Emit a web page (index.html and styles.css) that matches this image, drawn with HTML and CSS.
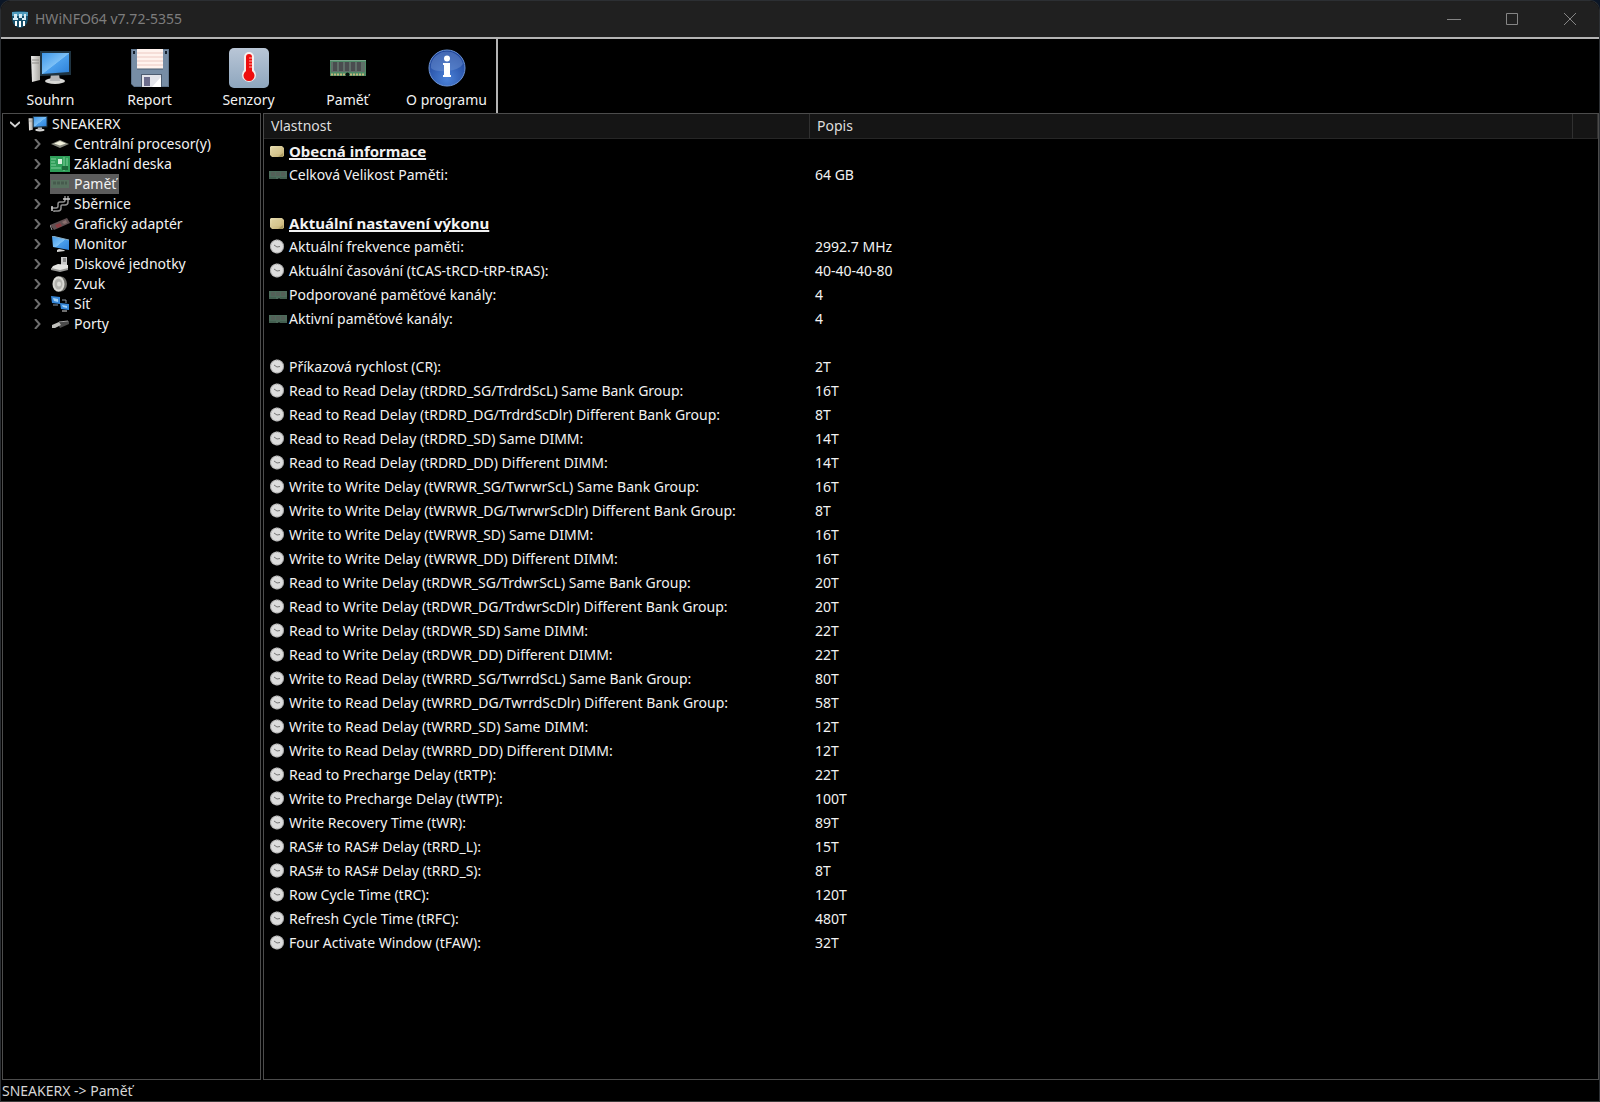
FILE: index.html
```html
<!DOCTYPE html>
<html lang="cs">
<head>
<meta charset="utf-8">
<meta name="viewport" content="width=device-width, initial-scale=1">
<title>HWiNFO64 v7.72-5355</title>
<link rel="stylesheet" href="styles.css">
</head>
<body>
<svg class="sprite" aria-hidden="true">
  <defs>
    <linearGradient id="g-screen" x1="0" y1="0" x2="1" y2="1"><stop offset="0" stop-color="#3f98ea"/><stop offset=".5" stop-color="#7cc0f6"/><stop offset=".52" stop-color="#4a9fec"/><stop offset="1" stop-color="#2d80d8"/></linearGradient>
    <linearGradient id="g-case" x1="0" x2="1"><stop offset="0" stop-color="#efeeec"/><stop offset="1" stop-color="#a9a7a2"/></linearGradient>
    <linearGradient id="g-note" x1="0" y1="0" x2="1" y2="1"><stop offset="0" stop-color="#e9dfb4"/><stop offset="1" stop-color="#c2ae70"/></linearGradient>
    <linearGradient id="g-panel" x1="0" y1="0" x2="0" y2="1"><stop offset="0" stop-color="#b9c6d6"/><stop offset="1" stop-color="#8ea6be"/></linearGradient>
    <radialGradient id="g-info" cx=".5" cy=".8" r=".8"><stop offset="0" stop-color="#4b82d8"/><stop offset="1" stop-color="#1b3f94"/></radialGradient>
    <radialGradient id="g-dial"><stop offset="0" stop-color="#c4c4c4"/><stop offset=".6" stop-color="#eeeeee"/><stop offset="1" stop-color="#bdbdbd"/></radialGradient>
  </defs>
  <symbol id="i-computer" viewBox="0 0 40 34">
    <path d="M0 5h9v24l-8 2z" fill="url(#g-case)"/><path d="M1 9h7M1 12h7" stroke="#8d8b87"/>
    <ellipse cx="24" cy="30" rx="10" ry="3" fill="#d8d8d6"/><path d="M20 23h8l1 7h-10z" fill="#b5b6b8"/>
    <path d="M9 0h31v24l-31 1z" fill="#1f3442"/><path d="M11 2h27v19l-27 2z" fill="url(#g-screen)"/>
  </symbol>
  <symbol id="i-note" viewBox="0 0 16 16">
    <path d="M2 2h11l2 2v8l-2 1H3l-2-2V3z" fill="url(#g-note)"/><path d="M3 5h9M3 7h9M3 9h8" stroke="#d9ca94"/><path d="M9 13l5-4v4z" fill="#a99a63"/>
  </symbol>
  <symbol id="i-clock" viewBox="0 0 16 16">
    <circle cx="8" cy="7.500" r="7" fill="url(#g-dial)"/><circle cx="8" cy="7.500" r="6.500" fill="none" stroke="#8e8e8e" stroke-dasharray="1 1.4"/><circle cx="8" cy="7.500" r="5" fill="#dcdcdc"/><path d="M5 6l3 2 3-.5" fill="none" stroke="#777"/>
  </symbol>
  <symbol id="i-ram" viewBox="0 0 18 8">
    <path d="M0 0h18v8h-7l-1-1-1 1H0z" fill="#4d6b5b"/><path d="M2 1h4v4H2zM7 1h4v4H7zM12 1h4v4h-4z" fill="#546058"/><path d="M0 7h7M11 7h7" stroke="#3b5547"/>
  </symbol>
  <symbol id="i-chevron" viewBox="0 0 10 10"><path d="M3 0l4.500 5L3 10" fill="none" stroke="currentColor" stroke-width="2"/></symbol>
</svg>

<div class="window">
  <header class="titlebar">
    <svg class="logo" viewBox="0 0 18 17" aria-hidden="true">
      <path d="M1 1q8-2 16 0v7q-1 8-8 9-7-1-8-9z" fill="#17506b"/><path d="M1 1h16v4H1z" fill="#4e9bbd"/>
      <path d="M3 3h3v4H3zM8 3h3v4H8zM13 3h2v4h-2zM2 7h5v2H2zM11 7h4v2h-4z" fill="#d5eaf2"/><path d="M4 10h2v5H4zM8 10h2v6H8zM12 10h2v5h-2z" fill="#fff"/>
    </svg>
    <h1 class="title">HWiNFO64 v7.72-5355</h1>
    <button class="caption" aria-label="Minimalizovat"><svg viewBox="0 0 14 14"><path d="M0 7.500h14"/></svg></button>
    <button class="caption" aria-label="Maximalizovat"><svg viewBox="0 0 14 14"><path d="M1.500 1.500h11v11h-11z"/></svg></button>
    <button class="caption" aria-label="Zavřít"><svg viewBox="0 0 14 14"><path d="M1 1l12 12M13 1L1 13"/></svg></button>
  </header>

  <nav class="toolbar" aria-label="Nástroje">
    <button class="tool"><svg class="tool-icon" viewBox="0 0 40 40"><use href="#i-computer" y="3" width="40" height="34"/></svg>Souhrn</button>
    <button class="tool">
      <svg class="tool-icon" viewBox="0 0 40 40">
        <path d="M1 1h38v38H4l-3-3z" fill="#60758c"/><path d="M2 2h36v36H4l-2-2z" fill="#778da5"/>
        <path d="M7 1h26v20H7z" fill="#fff3ee"/><path d="M7 5h26M7 9h26M7 13h26M7 17h26" stroke="#ecc9c2"/><path d="M7 21h26" stroke="#4b5c70"/>
        <path d="M3 3h2v3H3zM35 3h2v3h-2z" fill="#15202d"/>
        <path d="M11 26h21v13H11z" fill="#4d5c70"/><path d="M12 27h19v12H12z" fill="#e3e4ea"/><path d="M14 29h6v9h-6z" fill="#6d6d8c"/><path d="M22 39l9-10v10z" fill="#fff"/>
      </svg>Report</button>
    <button class="tool">
      <svg class="tool-icon" viewBox="0 0 40 40">
        <rect width="40" height="40" rx="5" fill="url(#g-panel)"/>
        <path d="M15 9a5 5 0 0 1 10 0v13a7 7 0 1 1-10 0z" fill="#f6efee"/><path d="M17 9a3 3 0 0 1 6 0v14a5.500 5.500 0 1 1-6 0z" fill="#ee0d0d"/><path d="M20 10h3M20 13h3M20 16h3M20 19h3" stroke="#ffb0a8"/>
      </svg>Senzory</button>
    <button class="tool">
      <svg class="tool-icon" viewBox="0 0 40 40">
        <path d="M2 12h36v16H2z" fill="#4d8a66"/><path d="M3 14h34v10H3z" fill="#5f6f68"/>
        <path d="M5 14h4v9H5zM11 14h4v9h-4zM17 14h4v9h-4zM23 14h4v9h-4zM29 14h4v9h-4z" fill="#4a4d4f"/><path d="M2 12.500h36" stroke="#7ba58b"/>
        <path d="M3 26.500h14M22 26.500h15" stroke="#c3b77c" stroke-width="2" stroke-dasharray="2 1"/><circle cx="19.500" cy="26.500" r="2" fill="#08120c"/>
      </svg>Paměť</button>
    <button class="tool">
      <svg class="tool-icon" viewBox="0 0 40 40">
        <circle cx="20" cy="20" r="18" fill="url(#g-info)" stroke="#6c94d6"/><path d="M4 16a16.500 16.500 0 0 1 32 0q-4 6-16 7Q8 24 4 20z" fill="#6c8fcf" opacity=".5"/>
        <circle cx="20" cy="10.500" r="3" fill="#fff"/><path d="M16 15h7v12h1v2h-8v-2h1V17h-1z" fill="#fff"/>
      </svg>O programu</button>
  </nav>

  <div class="panes">
    <aside class="tree" aria-label="Zařízení">
      <div class="root">
        <button class="node"><svg class="arrow open"><use href="#i-chevron"/></svg><svg class="node-icon"><use href="#i-computer"/></svg><span>SNEAKERX</span></button>
      </div>
      <ul class="branch">
        <li><button class="node"><svg class="arrow"><use href="#i-chevron"/></svg><span class="pick"><svg class="node-icon" viewBox="0 0 20 16"><path d="M1 8l9-4 9 4-9 4z" fill="#85877c"/><path d="M4 7.500l6-2.500 6 2.500-6 2z" fill="#f1f1dc"/></svg>Centrální procesor(y)</span></button></li>
        <li><button class="node"><svg class="arrow"><use href="#i-chevron"/></svg><span class="pick"><svg class="node-icon" viewBox="0 0 20 16"><path d="M0 0h20v16H0z" fill="#2f9e59"/><path d="M1 3h5M1 6h4M1 9h5M1 12h10M14 1v14M17 2v12" stroke="#80cf9c"/><path d="M8 3h4v5H8z" fill="#d7eedd"/><path d="M12 10h6v4h-6z" fill="#1c6b3a"/></svg>Základní deska</span></button></li>
        <li><button class="node"><svg class="arrow"><use href="#i-chevron"/></svg><span class="pick selected"><svg class="node-icon" viewBox="0 0 20 16"><path d="M1 4h18v8H1z" fill="#56705e"/><path d="M3 7h14" stroke="#465a4d" stroke-width="3" stroke-dasharray="3 1"/></svg>Paměť</span></button></li>
        <li><button class="node"><svg class="arrow"><use href="#i-chevron"/></svg><span class="pick"><svg class="node-icon" viewBox="0 0 20 16"><path d="M1 12h5q2 0 2-2V8q0-2 2-2h3q2 0 2-2V0M4 16v-1h4q3 0 3-3v-2q0-1 1-1h3q3 0 3-3V0" fill="none" stroke="#8f8f8f" stroke-width="1.500"/><path d="M2 10v5M13 3h7" stroke="#cfcfcf" stroke-width="1.500"/></svg>Sběrnice</span></button></li>
        <li><button class="node"><svg class="arrow"><use href="#i-chevron"/></svg><span class="pick"><svg class="node-icon" viewBox="0 0 20 16"><path d="M0 9L17 2l3 5L4 14z" fill="#625153"/><path d="M5 9l5-2 2 3-5 2z" fill="#8c3d42"/><path d="M12 6l4-2 1 3-3 1z" fill="#89706f"/><path d="M0 9l2 5" stroke="#999"/></svg>Grafický adaptér</span></button></li>
        <li><button class="node"><svg class="arrow"><use href="#i-chevron"/></svg><span class="pick"><svg class="node-icon" viewBox="0 0 20 16"><path d="M2 0l17 4v10L3 11z" fill="url(#g-screen)"/><path d="M2 0l17 4" stroke="#8aaec4"/><path d="M9 13l5 1 1 1-8 1v-2z" fill="#d5d5d3"/></svg>Monitor</span></button></li>
        <li><button class="node"><svg class="arrow"><use href="#i-chevron"/></svg><span class="pick"><svg class="node-icon" viewBox="0 0 20 16"><path d="M11 1h6v9h-6z" fill="#c9c9c9"/><path d="M13 2h3v4h-3z" fill="#8a8a8a"/><path d="M3 10l5-2 10 1v4l-7 2-10-2z" fill="#e4e4e2"/><path d="M1 12l9 2 8-2v2l-8 2-9-2z" fill="#9a9a98"/></svg>Diskové jednotky</span></button></li>
        <li><button class="node"><svg class="arrow"><use href="#i-chevron"/></svg><span class="pick"><svg class="node-icon" viewBox="0 0 20 16"><ellipse cx="11" cy="8" rx="6" ry="7.500" fill="#6c6c68"/><ellipse cx="8.500" cy="8" rx="6" ry="7.800" fill="#dadad5"/><ellipse cx="8.500" cy="8" rx="4" ry="5.500" fill="#b4b4b0"/><ellipse cx="9" cy="8" rx="2" ry="2.500" fill="#deded9"/></svg>Zvuk</span></button></li>
        <li><button class="node"><svg class="arrow"><use href="#i-chevron"/></svg><span class="pick"><svg class="node-icon" viewBox="0 0 20 16"><path d="M1 0l9 1v7L2 7z" fill="#3687d8"/><path d="M3 2l5 1v3L4 5z" fill="#a1d1f7"/><path d="M3 9h5M12 4h4v3" fill="none" stroke="#8c99a5"/><path d="M10 7l9 1v6l-8-1z" fill="#3687d8"/><path d="M12 9l5 1v2l-4-1z" fill="#a1d1f7"/><path d="M12 15h5" stroke="#ddd"/></svg>Síť</span></button></li>
        <li><button class="node"><svg class="arrow"><use href="#i-chevron"/></svg><span class="pick"><svg class="node-icon" viewBox="0 0 20 16"><path d="M7 7l12-2v3l-9 4z" fill="#4a4a4a"/><path d="M2 9l7-3 2 3-6 3H2z" fill="#c0c0bc"/><path d="M9 6l9-1" stroke="#a2a2a2"/></svg>Porty</span></button></li>
      </ul>
    </aside>

    <main class="details">
      <table class="props">
        <colgroup><col class="c-name"><col><col class="c-end"></colgroup>
        <thead><tr><th scope="col">Vlastnost</th><th scope="col">Popis</th><td></td></tr></thead>
        <tbody>
          <tr class="group"><th scope="rowgroup" colspan="3"><svg class="ic"><use href="#i-note"/></svg><span>Obecná informace</span></th></tr>
          <tr><th scope="row"><svg class="ic ram"><use href="#i-ram"/></svg>Celková Velikost Paměti:</th><td>64 GB</td></tr>
          <tr class="gap"><td colspan="3"></td></tr>
          <tr class="group"><th scope="rowgroup" colspan="3"><svg class="ic"><use href="#i-note"/></svg><span>Aktuální nastavení výkonu</span></th></tr>
          <tr><th scope="row"><svg class="ic"><use href="#i-clock"/></svg>Aktuální frekvence paměti:</th><td>2992.7 MHz</td></tr>
          <tr><th scope="row"><svg class="ic"><use href="#i-clock"/></svg>Aktuální časování (tCAS-tRCD-tRP-tRAS):</th><td>40-40-40-80</td></tr>
          <tr><th scope="row"><svg class="ic ram"><use href="#i-ram"/></svg>Podporované paměťové kanály:</th><td>4</td></tr>
          <tr><th scope="row"><svg class="ic ram"><use href="#i-ram"/></svg>Aktivní paměťové kanály:</th><td>4</td></tr>
          <tr class="gap"><td colspan="3"></td></tr>
          <tr><th scope="row"><svg class="ic"><use href="#i-clock"/></svg>Příkazová rychlost (CR):</th><td>2T</td></tr>
          <tr><th scope="row"><svg class="ic"><use href="#i-clock"/></svg>Read to Read Delay (tRDRD_SG/TrdrdScL) Same Bank Group:</th><td>16T</td></tr>
          <tr><th scope="row"><svg class="ic"><use href="#i-clock"/></svg>Read to Read Delay (tRDRD_DG/TrdrdScDlr) Different Bank Group:</th><td>8T</td></tr>
          <tr><th scope="row"><svg class="ic"><use href="#i-clock"/></svg>Read to Read Delay (tRDRD_SD) Same DIMM:</th><td>14T</td></tr>
          <tr><th scope="row"><svg class="ic"><use href="#i-clock"/></svg>Read to Read Delay (tRDRD_DD) Different DIMM:</th><td>14T</td></tr>
          <tr><th scope="row"><svg class="ic"><use href="#i-clock"/></svg>Write to Write Delay (tWRWR_SG/TwrwrScL) Same Bank Group:</th><td>16T</td></tr>
          <tr><th scope="row"><svg class="ic"><use href="#i-clock"/></svg>Write to Write Delay (tWRWR_DG/TwrwrScDlr) Different Bank Group:</th><td>8T</td></tr>
          <tr><th scope="row"><svg class="ic"><use href="#i-clock"/></svg>Write to Write Delay (tWRWR_SD) Same DIMM:</th><td>16T</td></tr>
          <tr><th scope="row"><svg class="ic"><use href="#i-clock"/></svg>Write to Write Delay (tWRWR_DD) Different DIMM:</th><td>16T</td></tr>
          <tr><th scope="row"><svg class="ic"><use href="#i-clock"/></svg>Read to Write Delay (tRDWR_SG/TrdwrScL) Same Bank Group:</th><td>20T</td></tr>
          <tr><th scope="row"><svg class="ic"><use href="#i-clock"/></svg>Read to Write Delay (tRDWR_DG/TrdwrScDlr) Different Bank Group:</th><td>20T</td></tr>
          <tr><th scope="row"><svg class="ic"><use href="#i-clock"/></svg>Read to Write Delay (tRDWR_SD) Same DIMM:</th><td>22T</td></tr>
          <tr><th scope="row"><svg class="ic"><use href="#i-clock"/></svg>Read to Write Delay (tRDWR_DD) Different DIMM:</th><td>22T</td></tr>
          <tr><th scope="row"><svg class="ic"><use href="#i-clock"/></svg>Write to Read Delay (tWRRD_SG/TwrrdScL) Same Bank Group:</th><td>80T</td></tr>
          <tr><th scope="row"><svg class="ic"><use href="#i-clock"/></svg>Write to Read Delay (tWRRD_DG/TwrrdScDlr) Different Bank Group:</th><td>58T</td></tr>
          <tr><th scope="row"><svg class="ic"><use href="#i-clock"/></svg>Write to Read Delay (tWRRD_SD) Same DIMM:</th><td>12T</td></tr>
          <tr><th scope="row"><svg class="ic"><use href="#i-clock"/></svg>Write to Read Delay (tWRRD_DD) Different DIMM:</th><td>12T</td></tr>
          <tr><th scope="row"><svg class="ic"><use href="#i-clock"/></svg>Read to Precharge Delay (tRTP):</th><td>22T</td></tr>
          <tr><th scope="row"><svg class="ic"><use href="#i-clock"/></svg>Write to Precharge Delay (tWTP):</th><td>100T</td></tr>
          <tr><th scope="row"><svg class="ic"><use href="#i-clock"/></svg>Write Recovery Time (tWR):</th><td>89T</td></tr>
          <tr><th scope="row"><svg class="ic"><use href="#i-clock"/></svg>RAS# to RAS# Delay (tRRD_L):</th><td>15T</td></tr>
          <tr><th scope="row"><svg class="ic"><use href="#i-clock"/></svg>RAS# to RAS# Delay (tRRD_S):</th><td>8T</td></tr>
          <tr><th scope="row"><svg class="ic"><use href="#i-clock"/></svg>Row Cycle Time (tRC):</th><td>120T</td></tr>
          <tr><th scope="row"><svg class="ic"><use href="#i-clock"/></svg>Refresh Cycle Time (tRFC):</th><td>480T</td></tr>
          <tr><th scope="row"><svg class="ic"><use href="#i-clock"/></svg>Four Activate Window (tFAW):</th><td>32T</td></tr>
        </tbody>
      </table>
    </main>
  </div>

  <footer class="status">SNEAKERX -&gt; Paměť</footer>
</div>
</body>
</html>
```
FILE: styles.css
```css
* { box-sizing: border-box; }

body {
  margin: 0;
  background: #0b1626;
  color: #f2f2f2;
  font: 14px/20px "Noto Sans", sans-serif;
}

button {
  margin: 0;
  padding: 0;
  border: 0;
  background: none;
  color: inherit;
  font: inherit;
}

.sprite { position: absolute; width: 0; height: 0; }

.window {
  display: flex;
  flex-direction: column;
  min-height: 100vh;
  border: 1px solid #2c2f33;
  border-bottom-color: #3a3a3a;
  border-radius: 10px 10px 0 0;
  background: #000;
  overflow: hidden;
}

.titlebar {
  display: flex;
  align-items: center;
  height: 38px;
  padding-left: 10px;
  border-bottom: 2px solid #b4b4b4;
  background: #202020;
}

.logo { width: 18px; height: 17px; margin-right: 6px; }

.title {
  flex: 1;
  margin: 0;
  color: #7d7d7d;
  font-size: 14px;
  font-weight: 400;
}

.caption { width: 58px; height: 36px; }

.caption svg {
  display: block;
  width: 14px;
  height: 14px;
  margin: auto;
  fill: none;
  stroke: #858585;
}

.toolbar {
  display: flex;
  align-self: flex-start;
  height: 74px;
  border-right: 2px solid #b4b4b4;
}

.tool {
  display: flex;
  flex-direction: column;
  align-items: center;
  gap: 2px;
  width: 99px;
  padding-top: 9px;
}

.tool-icon { width: 40px; height: 40px; }

.panes {
  display: grid;
  flex: 1;
  grid-template-columns: 259px 1fr;
  gap: 2px;
  padding-left: 1px;
}

.tree {
  padding-left: 6px;
  border: 1px solid #4c4c4c;
}

.branch {
  margin: 0;
  padding: 0 0 0 23px;
  list-style: none;
}

.node {
  display: flex;
  align-items: center;
  height: 20px;
  white-space: nowrap;
}

.arrow {
  width: 10px;
  height: 10px;
  margin-right: 8px;
  color: #6e6e6e;
}

.arrow.open {
  margin-left: 1px;
  color: #d0d0d0;
  transform: rotate(90deg);
}

.node-icon { width: 20px; height: 16px; margin-right: 4px; }

.pick {
  display: flex;
  align-items: center;
  height: 20px;
  padding-right: 3px;
}

.selected { background: #5c5c5c; }

.details { border: 1px solid #4c4c4c; }

.props {
  width: 100%;
  border-collapse: separate;
  border-spacing: 0;
  table-layout: fixed;
}

.c-name { width: 546px; }
.c-end { width: 25px; }

.props th,
.props td {
  height: 24px;
  padding: 0 0 0 5px;
  font-weight: 400;
  line-height: 20px;
  text-align: left;
  white-space: nowrap;
}

.props thead th,
.props thead td {
  height: 25px;
  padding-left: 7px;
  border-right: 1px solid #303030;
  border-bottom: 1px solid #262626;
  background: #151515;
  color: #dedede;
}

.props .group th { font-size: 15px; font-weight: 700; }

.group span { text-decoration: underline; text-decoration-thickness: 2px; }

.ic {
  width: 16px;
  height: 16px;
  margin-right: 4px;
  vertical-align: -3px;
}

.ram { width: 18px; height: 8px; margin-right: 2px; vertical-align: 1px; }

.status { height: 21px; padding: 2px 0 0 1px; line-height: 18px; color: #d6d6d6; }
```
